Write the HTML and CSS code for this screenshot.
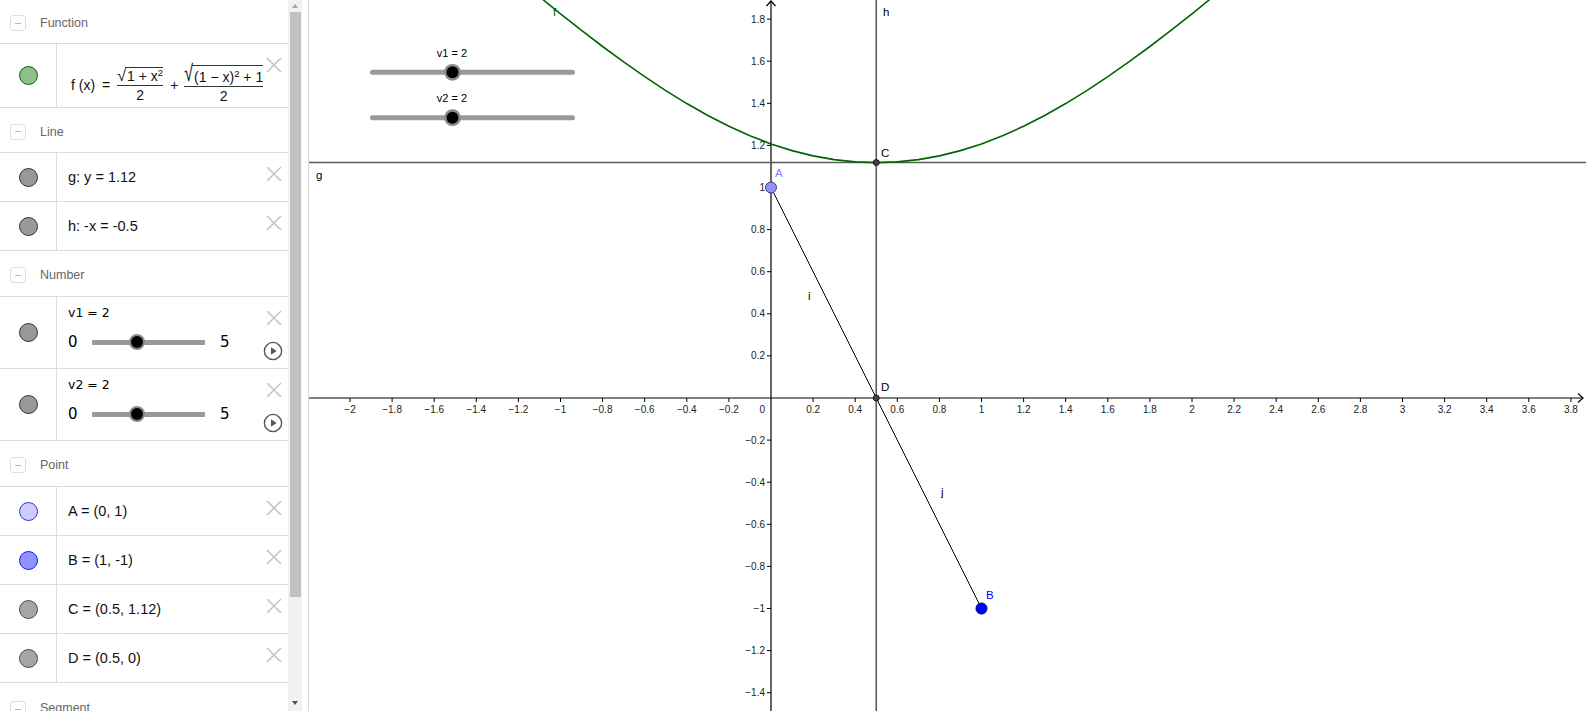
FILE: index.html
```html
<!DOCTYPE html>
<html>
<head>
<meta charset="utf-8">
<link rel="stylesheet" href="styles.css">
</head>
<body>
<div class="app">
  <div class="algebra">
    <div class="header first"><span class="collapse"></span><span class="htext">Function</span></div>
    <div class="item func">
      <div class="marker"><span class="dot green"></span></div>
      <div class="content">
        <div class="formula">
          <span class="fx">f (x)</span><span class="op">=</span>
          <span class="frac">
            <span class="num"><span class="sqrt"><span class="rsign">√</span><span class="radicand">1 + x<sup>2</sup></span></span></span>
            <span class="den">2</span>
          </span>
          <span class="op plus">+</span>
          <span class="frac">
            <span class="num"><span class="sqrt tall"><span class="rsign">√</span><span class="radicand">(1 − x)<sup>2</sup> + 1</span></span></span>
            <span class="den">2</span>
          </span>
        </div>
      </div>
      <div class="actions"><svg class="del" viewBox="0 0 16 16"><path d="M1 1L15 15M15 1L1 15"/></svg></div>
    </div>

    <div class="header h45"><span class="collapse"></span><span class="htext">Line</span></div>
    <div class="item">
      <div class="marker"><span class="dot gray"></span></div>
      <div class="content"><span class="expr">g: y = 1.12</span></div>
      <div class="actions"><svg class="del" viewBox="0 0 16 16"><path d="M1 1L15 15M15 1L1 15"/></svg></div>
    </div>
    <div class="item">
      <div class="marker"><span class="dot gray"></span></div>
      <div class="content"><span class="expr">h: -x = -0.5</span></div>
      <div class="actions"><svg class="del" viewBox="0 0 16 16"><path d="M1 1L15 15M15 1L1 15"/></svg></div>
    </div>

    <div class="header h46"><span class="collapse"></span><span class="htext">Number</span></div>
    <div class="item slider-item">
      <div class="marker"><span class="dot gray"></span></div>
      <div class="content col">
        <span class="slabel">v1 = 2</span>
        <div class="srow"><span class="snum">0</span><div class="track"><span class="knob" style="left:40%"></span></div><span class="snum">5</span></div>
      </div>
      <div class="actions">
        <svg class="del" viewBox="0 0 16 16"><path d="M1 1L15 15M15 1L1 15"/></svg>
        <svg class="play" viewBox="0 0 20 20"><circle cx="10" cy="10" r="8.6"/><path d="M8 6.2L13.6 10L8 13.8Z"/></svg>
      </div>
    </div>
    <div class="item slider-item">
      <div class="marker"><span class="dot gray"></span></div>
      <div class="content col">
        <span class="slabel">v2 = 2</span>
        <div class="srow"><span class="snum">0</span><div class="track"><span class="knob" style="left:40%"></span></div><span class="snum">5</span></div>
      </div>
      <div class="actions">
        <svg class="del" viewBox="0 0 16 16"><path d="M1 1L15 15M15 1L1 15"/></svg>
        <svg class="play" viewBox="0 0 20 20"><circle cx="10" cy="10" r="8.6"/><path d="M8 6.2L13.6 10L8 13.8Z"/></svg>
      </div>
    </div>

    <div class="header h46"><span class="collapse"></span><span class="htext">Point</span></div>
    <div class="item">
      <div class="marker"><span class="dot ptA"></span></div>
      <div class="content"><span class="expr">A = (0, 1)</span></div>
      <div class="actions"><svg class="del" viewBox="0 0 16 16"><path d="M1 1L15 15M15 1L1 15"/></svg></div>
    </div>
    <div class="item">
      <div class="marker"><span class="dot ptB"></span></div>
      <div class="content"><span class="expr">B = (1, -1)</span></div>
      <div class="actions"><svg class="del" viewBox="0 0 16 16"><path d="M1 1L15 15M15 1L1 15"/></svg></div>
    </div>
    <div class="item">
      <div class="marker"><span class="dot ptC"></span></div>
      <div class="content"><span class="expr">C = (0.5, 1.12)</span></div>
      <div class="actions"><svg class="del" viewBox="0 0 16 16"><path d="M1 1L15 15M15 1L1 15"/></svg></div>
    </div>
    <div class="item">
      <div class="marker"><span class="dot ptC"></span></div>
      <div class="content"><span class="expr">D = (0.5, 0)</span></div>
      <div class="actions"><svg class="del" viewBox="0 0 16 16"><path d="M1 1L15 15M15 1L1 15"/></svg></div>
    </div>
    <div class="header h46 last"><span class="collapse"></span><span class="htext">Segment</span></div>
  </div>

  <div class="scrollbar">
    <span class="sb-up"></span>
    <span class="sb-thumb"></span>
    <span class="sb-fill"></span>
    <span class="sb-down"></span>
  </div>
  <div class="splitter"></div>

  <div class="graphics">
    <svg class="plot" viewBox="309 0 1277 711" width="1277" height="711">
      <g class="axis">
        <line x1="309" y1="398" x2="1583" y2="398"/>
        <path d="M1578 393.5L1583 398L1578 402.5" fill="none"/>
        <line x1="771" y1="1" x2="771" y2="711"/>
        <path d="M766.5 6L771 1L775.5 6" fill="none"/>
      </g>
      <g class="ticks">
        <path d="M350 398v4M392.1 398v4M434.2 398v4M476.3 398v4M518.4 398v4M560.5 398v4M602.6 398v4M644.7 398v4M686.8 398v4M728.9 398v4M813.1 398v4M855.2 398v4M897.3 398v4M939.4 398v4M981.5 398v4M1023.6 398v4M1065.7 398v4M1107.8 398v4M1149.9 398v4M1192 398v4M1234.1 398v4M1276.2 398v4M1318.3 398v4M1360.4 398v4M1402.5 398v4M1444.6 398v4M1486.7 398v4M1528.8 398v4M1570.9 398v4"/>
        <path d="M767 19.1h4M767 61.2h4M767 103.3h4M767 145.4h4M767 187.5h4M767 229.6h4M767 271.7h4M767 313.8h4M767 355.9h4M767 440.1h4M767 482.2h4M767 524.3h4M767 566.4h4M767 608.5h4M767 650.6h4M767 692.7h4"/>
      </g>
      <g class="xlab">
        <text x="350" y="413">−2</text>
        <text x="392.1" y="413">−1.8</text>
        <text x="434.2" y="413">−1.6</text>
        <text x="476.3" y="413">−1.4</text>
        <text x="518.4" y="413">−1.2</text>
        <text x="560.5" y="413">−1</text>
        <text x="602.6" y="413">−0.8</text>
        <text x="644.7" y="413">−0.6</text>
        <text x="686.8" y="413">−0.4</text>
        <text x="728.9" y="413">−0.2</text>
        <text x="813.1" y="413">0.2</text>
        <text x="855.2" y="413">0.4</text>
        <text x="897.3" y="413">0.6</text>
        <text x="939.4" y="413">0.8</text>
        <text x="981.5" y="413">1</text>
        <text x="1023.6" y="413">1.2</text>
        <text x="1065.7" y="413">1.4</text>
        <text x="1107.8" y="413">1.6</text>
        <text x="1149.9" y="413">1.8</text>
        <text x="1192" y="413">2</text>
        <text x="1234.1" y="413">2.2</text>
        <text x="1276.2" y="413">2.4</text>
        <text x="1318.3" y="413">2.6</text>
        <text x="1360.4" y="413">2.8</text>
        <text x="1402.5" y="413">3</text>
        <text x="1444.6" y="413">3.2</text>
        <text x="1486.7" y="413">3.4</text>
        <text x="1528.8" y="413">3.6</text>
        <text x="1570.9" y="413">3.8</text>
      </g>
      <g class="ylab">
        <text x="765" y="413">0</text>
        <text x="765" y="22.6">1.8</text>
        <text x="765" y="64.7">1.6</text>
        <text x="765" y="106.8">1.4</text>
        <text x="765" y="148.9">1.2</text>
        <text x="765" y="191">1</text>
        <text x="765" y="233.1">0.8</text>
        <text x="765" y="275.2">0.6</text>
        <text x="765" y="317.3">0.4</text>
        <text x="765" y="359.4">0.2</text>
        <text x="765" y="443.6">−0.2</text>
        <text x="765" y="485.7">−0.4</text>
        <text x="765" y="527.8">−0.6</text>
        <text x="765" y="569.9">−0.8</text>
        <text x="765" y="612">−1</text>
        <text x="765" y="654.1">−1.2</text>
        <text x="765" y="696.2">−1.4</text>
      </g>

      <line class="gline" x1="309" y1="162.5" x2="1586" y2="162.5"/>
      <line class="gline" x1="876.25" y1="0" x2="876.25" y2="711"/>

      <path class="curve" d="M539.45,-3.27 L560.5,13.81 L581.55,30.42 L602.6,46.49 L623.65,61.94 L644.7,76.67 L665.75,90.59 L686.8,103.56 L707.85,115.49 L728.9,126.26 L749.95,135.76 L771,143.9 L792.05,150.63 L813.1,155.88 L834.15,159.64 L855.2,161.9 L876.25,162.66 L897.3,161.9 L918.35,159.64 L939.4,155.88 L960.45,150.63 L981.5,143.9 L1002.55,135.76 L1023.6,126.26 L1044.65,115.49 L1065.7,103.56 L1086.75,90.59 L1107.8,76.67 L1128.85,61.94 L1149.9,46.49 L1170.95,30.42 L1192,13.81 L1213.05,-3.27"/>

      <line class="seg" x1="771" y1="187.5" x2="981.5" y2="608.5"/>

      <circle class="pA" cx="771" cy="187.5" r="5.5"/>
      <circle class="pB" cx="981.5" cy="608.5" r="5.5"/>
      <circle class="pC" cx="876.25" cy="162.5" r="3"/>
      <circle class="pC" cx="876.25" cy="398" r="3"/>

      <g class="olab">
        <text class="lf" x="553" y="16">f</text>
        <text x="883" y="16">h</text>
        <text x="316" y="179">g</text>
        <text x="881" y="157">C</text>
        <text x="881" y="391">D</text>
        <text x="808" y="300">i</text>
        <text x="941" y="496">j</text>
        <text class="lA" x="775" y="177">A</text>
        <text class="lB" x="986" y="599">B</text>
      </g>

      <g class="gslider">
        <text class="slab" x="452" y="56.5">v1 = 2</text>
        <line class="strack" x1="372.5" y1="72.3" x2="572.5" y2="72.3"/>
        <circle class="sknob" cx="452.5" cy="72.3" r="7.2"/>
        <text class="slab" x="452" y="102">v2 = 2</text>
        <line class="strack" x1="372.5" y1="117.7" x2="572.5" y2="117.7"/>
        <circle class="sknob" cx="452.5" cy="117.7" r="7.2"/>
      </g>
    </svg>
  </div>
</div>
</body>
</html>
```

FILE: styles.css
```css
html, body {
  margin: 0;
  padding: 0;
  background: #fff;
  overflow: hidden;
}
body {
  font-family: "Liberation Sans", Arial, sans-serif;
  color: #000;
}
.app {
  display: flex;
  width: 1586px;
  height: 711px;
}

/* ---------- algebra view ---------- */
.algebra {
  width: 288px;
  flex: none;
  height: 711px;
  overflow: hidden;
  background: #fff;
}
.header {
  height: 45px;
  box-sizing: border-box;
  border-bottom: 1px solid #dcdcdc;
  display: flex;
  align-items: center;
  padding-top: 3px;
}
.header.first { height: 44px; }
.header.h46 { height: 46px; }
.header.last { align-items: flex-start; padding-top: 18px; }
.collapse {
  width: 14px;
  height: 14px;
  margin-left: 10px;
  border: 1px solid #dedede;
  border-radius: 3px;
  display: flex;
  align-items: center;
  justify-content: center;
  box-sizing: content-box;
  flex: none;
}
.collapse::before {
  content: "";
  width: 6px;
  height: 1px;
  background: #b4b4b4;
}
.htext {
  margin-left: 14px;
  font-size: 12.5px;
  line-height: 14px;
  color: #666;
}
.item {
  display: flex;
  height: 49px;
  box-sizing: border-box;
  border-bottom: 1px solid #dcdcdc;
}
.item.func { height: 64px; }
.item.slider-item { height: 72px; }
.marker {
  width: 56px;
  flex: none;
  border-right: 1px solid #dcdcdc;
  display: flex;
  align-items: center;
  justify-content: center;
}
.dot {
  width: 17px;
  height: 17px;
  border-radius: 50%;
  border: 1px solid #444;
}
.dot.green { background: #8dbf8d; border-color: #006400; }
.dot.gray { background: #999; border-color: #333; }
.dot.ptA { background: #ccccff; border-color: #2f2fff; }
.dot.ptB { background: #9393ff; border-color: #1515ff; }
.dot.ptC { background: #a6a6a6; border-color: #4a4a4a; }
.content {
  flex: 1;
  padding-left: 11px;
  display: flex;
  align-items: center;
  min-width: 0;
}
.expr {
  font-size: 14.5px;
  font-family: "Liberation Sans", Arial, sans-serif;
  color: #111;
  white-space: pre;
}
.actions {
  width: 30px;
  flex: none;
  display: flex;
  flex-direction: column;
  align-items: center;
  padding-top: 13px;
  box-sizing: border-box;
}
.del {
  width: 16px;
  height: 16px;
  display: block;
  margin-left: 2px;
}
.del path {
  stroke: #c4c4c4;
  stroke-width: 1.6;
  fill: none;
}
.play {
  width: 20px;
  height: 20px;
  display: block;
  margin-top: 15px;
}
.play circle { fill: none; stroke: #555; stroke-width: 1.4; }
.play path { fill: #555; }

/* function formula */
.func .content { align-items: flex-start; padding-top: 21px; padding-left: 14px; }
.formula {
  display: flex;
  align-items: center;
  font-size: 14px;
  font-family: "Liberation Sans", Arial, sans-serif;
  color: #111;
  white-space: nowrap;
}
.fx { margin-right: 7px; }
.op { margin: 0 7px 0 0; }
.op.plus { margin: 0 6px 0 7px; }
.frac {
  display: inline-flex;
  flex-direction: column;
  align-items: center;
}
.num {
  border-bottom: 1px solid #333;
  padding: 0 0 1px;
  display: flex;
}
.den { padding-top: 2px; line-height: 15px; }
.sqrt {
  display: inline-flex;
  align-items: flex-end;
}
.rsign {
  font-size: 16px;
  line-height: 16px;
  margin-right: -1px;
}
.tall .rsign {
  transform: scaleY(1.45);
  transform-origin: bottom;
}
.radicand {
  border-top: 1px solid #333;
  padding: 1px 0 0 2px;
  line-height: 15px;
}
.tall .radicand { padding-top: 4px; }
.radicand sup { font-size: 9.5px; vertical-align: 5px; line-height: 0; }

/* sliders in algebra */
.col {
  flex-direction: column;
  align-items: flex-start;
  justify-content: flex-start;
  padding-top: 8px;
}
.slabel {
  font-family: "DejaVu Sans", sans-serif;
  font-size: 12.5px;
  line-height: 16px;
}
.srow {
  display: flex;
  align-items: center;
  height: 20px;
  margin-top: 11px;
}
.snum {
  font-family: "DejaVu Sans", sans-serif;
  font-size: 15px;
  line-height: 20px;
  width: 9px;
}
.track {
  width: 113px;
  height: 5px;
  background: #999;
  margin: 0 15px;
  position: relative;
  border-radius: 1px;
}
.knob {
  position: absolute;
  top: 50%;
  width: 12px;
  height: 12px;
  border-radius: 50%;
  background: #000;
  border: 2.5px solid #8a8a8a;
  transform: translate(-50%, -50%);
}

/* scrollbar */
.scrollbar {
  width: 14px;
  flex: none;
  background: #f1f1f1;
  display: flex;
  flex-direction: column;
  align-items: center;
}
.sb-up {
  margin-top: 4px;
  width: 0;
  height: 0;
  border-left: 3.5px solid transparent;
  border-right: 3.5px solid transparent;
  border-bottom: 4px solid #a3a3a3;
}
.sb-thumb {
  margin-top: 4px;
  width: 11px;
  height: 585px;
  background: #c1c1c1;
}
.sb-fill { flex: 1; }
.sb-down {
  margin-bottom: 6px;
  width: 0;
  height: 0;
  border-left: 3.5px solid transparent;
  border-right: 3.5px solid transparent;
  border-top: 4px solid #505050;
}
.splitter {
  width: 6px;
  flex: none;
  background: #fff;
  border-right: 1px solid #d6d6d6;
}

/* graphics */
.graphics {
  width: 1277px;
  flex: none;
  height: 711px;
  overflow: hidden;
}
.plot { display: block; }
.axis line, .axis path { stroke: #000; stroke-width: 1.2; }
.ticks path { stroke: #000; stroke-width: 1; fill: none; }
.xlab text, .ylab text {
  font-family: "Liberation Sans", Arial, sans-serif;
  font-size: 10px;
  fill: #222;
}
.xlab text { text-anchor: middle; }
.ylab text { text-anchor: end; }
.gline { stroke: #5c5c5c; stroke-width: 1.6; }
.curve { fill: none; stroke: #006400; stroke-width: 1.6; stroke-linejoin: round; }
.seg { stroke: #000; stroke-width: 1; }
.pA { fill: #9292f8; stroke: #3a3a7a; stroke-width: 1; }
.pB { fill: #0000ff; stroke: #00007a; stroke-width: 1; }
.pC { fill: #444; stroke: #000; stroke-width: 0.8; }
.olab text {
  font-family: "Liberation Sans", Arial, sans-serif;
  font-size: 11.5px;
  fill: #000;
}
.olab .lf { fill: #006400; }
.olab .lA { fill: #7b7bff; }
.olab .lB { fill: #0000ff; }
.slab {
  font-family: "Liberation Sans", Arial, sans-serif;
  font-size: 11px;
  text-anchor: middle;
  fill: #000;
}
.strack { stroke: #999; stroke-width: 5; stroke-linecap: round; }
.sknob { fill: #000; stroke: #8a8a8a; stroke-width: 2.4; }
```
